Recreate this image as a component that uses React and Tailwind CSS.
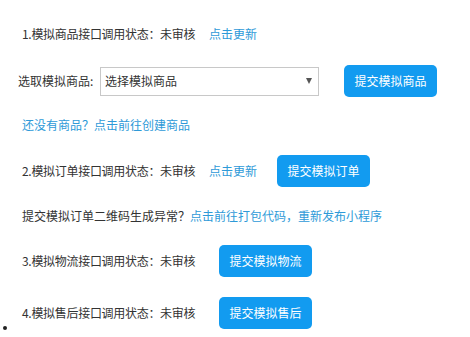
import React from 'react';

const Btn = ({ children, className = '' }) => (
  <button className={`h-[32px] w-[93px] rounded-[5px] bg-[#129bf0] text-[12px] text-white ${className}`}>
    {children}
  </button>
);

const Link = ({ children, className = '' }) => (
  <a className={`text-[#2e9ad8] cursor-pointer whitespace-nowrap ${className}`}>{children}</a>
);

export default function App() {
  return (
    <div
      className="w-[470px] h-[337px] bg-white text-[12px] text-[#333] overflow-hidden"
      style={{ fontFamily: '"Noto Sans CJK SC", "Microsoft YaHei", sans-serif' }}
    >
      <div className="flex flex-col pt-[24px]">
        <div className="flex items-center h-[20px] pl-[22px]">
          <span className="w-[187px] whitespace-nowrap tracking-[-0.3px]">1.模拟商品接口调用状态：未审核</span>
          <Link>点击更新</Link>
        </div>

        <div className="flex items-center h-[32px] mt-[21px] pl-[18px]">
          <span className="w-[82px] whitespace-nowrap">选取模拟商品:</span>
          <div className="flex items-center justify-between w-[219px] h-[29px] border border-[#c8c8c8] pl-[4px] pr-[6px]">
            <span>选择模拟商品</span>
            <span className="w-0 h-0 border-l-[3px] border-r-[3px] border-t-[6px] border-l-transparent border-r-transparent border-t-[#555]" />
          </div>
          <Btn className="ml-[25px]">提交模拟商品</Btn>
        </div>

        <div className="flex items-center h-[20px] mt-[18px] pl-[22px]">
          <Link>还没有商品？点击前往创建商品</Link>
        </div>

        <div className="flex items-center h-[32px] mt-[20px] pl-[22px]">
          <span className="w-[187px] whitespace-nowrap tracking-[-0.3px]">2.模拟订单接口调用状态：未审核</span>
          <Link className="w-[48px]">点击更新</Link>
          <Btn className="ml-[20px]">提交模拟订单</Btn>
        </div>

        <div className="flex items-center h-[20px] mt-[19px] pl-[22px]">
          <span className="whitespace-nowrap">提交模拟订单二维码生成异常？</span>
          <Link>点击前往打包代码，重新发布小程序</Link>
        </div>

        <div className="flex items-center h-[32px] mt-[19px] pl-[22px]">
          <span className="w-[197px] whitespace-nowrap tracking-[-0.3px]">3.模拟物流接口调用状态：未审核</span>
          <Btn>提交模拟物流</Btn>
        </div>

        <div className="flex items-center h-[32px] mt-[20px] pl-[22px]">
          <span className="w-[197px] whitespace-nowrap tracking-[-0.3px]">4.模拟售后接口调用状态：未审核</span>
          <Btn>提交模拟售后</Btn>
        </div>

        <div className="flex -mt-[3px] pl-[3px]">
          <span className="w-[4px] h-[4px] rounded-full bg-[#222]" />
        </div>
      </div>
    </div>
  );
}
